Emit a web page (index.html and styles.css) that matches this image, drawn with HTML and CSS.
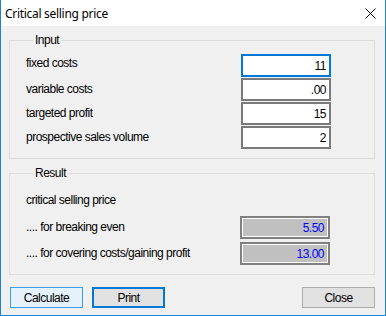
FILE: index.html
```html
<!DOCTYPE html>
<html lang="en">
<head>
  <meta charset="UTF-8" />
  <title>Critical selling price</title>
  <link rel="stylesheet" href="styles.css">
</head>
<body>
  <div class="window">
    <div class="titlebar">
      <span class="title">Critical selling price</span>
      <svg class="close-x" width="11" height="11" viewBox="0 0 11 11">
        <path d="M0.5 0.5 L10.5 10.5 M10.5 0.5 L0.5 10.5" stroke="#000" stroke-width="1" fill="none" />
      </svg>
    </div>

    <div class="dialog">
      <fieldset class="group">
        <legend>Input</legend>
        <div class="rows input-rows">
          <label class="first">fixed costs</label>
          <div class="field focused">11</div>
          <label>variable costs</label>
          <div class="field">.00</div>
          <label>targeted profit</label>
          <div class="field">15</div>
          <label>prospective sales volume</label>
          <div class="field">2</div>
        </div>
      </fieldset>

      <fieldset class="group result">
        <legend>Result</legend>
        <div class="heading">critical selling price</div>
        <div class="rows result-rows">
          <label>.... for breaking even</label>
          <div class="output">5.50</div>
          <label>.... for covering costs/gaining profit</label>
          <div class="output">13.00</div>
        </div>
      </fieldset>

      <div class="buttons">
        <button class="btn hover">Calculate</button>
        <button class="btn default">Print</button>
        <span class="spacer"></span>
        <button class="btn">Close</button>
      </div>
    </div>
  </div>
</body>
</html>
```

FILE: styles.css
```css
* {
  box-sizing: border-box;
}
body {
  margin: 0;
  font-family: 'Liberation Sans', Arial, sans-serif;
  font-size: 12px;
  letter-spacing: -0.5px;
  color: #000;
}
.window {
  width: 386px;
  height: 316px;
  border: 1px solid #1883d7;
  border-top: none;
  background: #f0f0f0;
  display: flex;
  flex-direction: column;
}
.titlebar {
  height: 26px;
  background: #fff;
  display: flex;
  align-items: center;
  padding: 0 9px 0 4px;
}
.title {
  font-family: 'Noto Sans', sans-serif;
  font-size: 12px;
  letter-spacing: -0.3px;
  flex: 1;
}
.close-x {
  margin-top: 1px;
}
.dialog {
  padding: 8px 10px 0 8px;
}

/* group boxes */
.group {
  margin: 0;
  border: 1px solid #dcdcdc;
  padding: 7px 43px 9px 15px;
}
.group legend {
  margin-left: 8px;
  padding: 0 2px;
  line-height: 13px;
  height: 13px;
}
.result {
  margin-top: 8px;
  padding: 9px 44px 9px 15px;
}
.rows {
  display: grid;
  grid-template-columns: 1fr 90px;
  align-items: center;
}
.input-rows {
  grid-template-rows: repeat(4, 23px);
  row-gap: 1px;
}
.result-rows {
  grid-template-rows: 23px 23px;
  row-gap: 3px;
}
.heading {
  height: 22px;
  line-height: 22px;
  margin-bottom: 5px;
  padding-left: 1px;
}
.rows label {
  padding: 0 0 2px 1px;
}
.rows label.first {
  padding-bottom: 6px;
}
.field {
  height: 23px;
  background: #fff;
  border: 2px solid #7a7a7a;
  text-align: right;
  padding: 3px 3px 0 0;
  line-height: 14px;
}
.field.focused {
  border-color: #0078d7;
}
.output {
  height: 23px;
  background: #c0c0c0;
  border: 2px solid #808080;
  box-shadow: inset 0 0 0 1px #fff;
  color: #0000ff;
  text-align: right;
  padding: 3px 4px 0 0;
  line-height: 14px;
}

/* buttons */
.buttons {
  display: flex;
  gap: 9px;
  margin-top: 12px;
  padding-left: 1px;
}
.spacer {
  flex: 1;
}
.btn {
  width: 73px;
  height: 21px;
  font-family: 'Liberation Sans', Arial, sans-serif;
  font-size: 12px;
  letter-spacing: -0.5px;
  background: #e1e1e1;
  border: 1px solid #adadad;
  padding: 0;
  color: #000;
}
.btn.hover {
  background: #e5f1fb;
  border-color: #3c9ee6;
}
.btn.default {
  border: 2px solid #0078d7;
}
```
